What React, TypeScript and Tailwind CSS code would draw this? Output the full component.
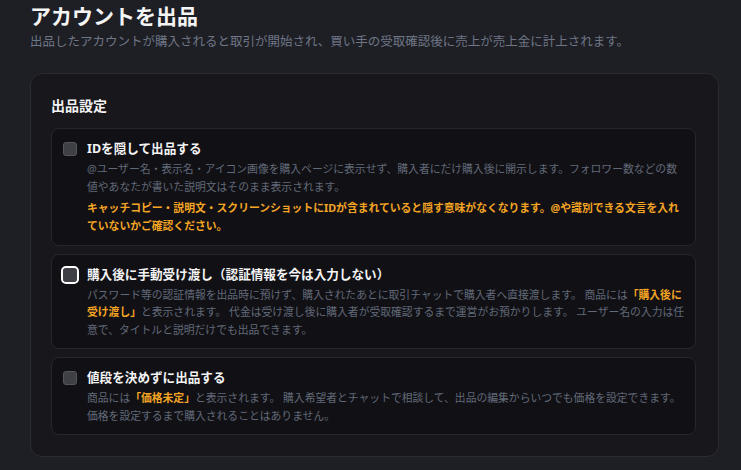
import { useState } from "react";

type Option = {
    id: string;
    title: string;
    body: React.ReactNode;
    warning?: string;
};

const Hl = ({ children }: { children: React.ReactNode }) => (
    <span className="font-bold text-[#f5a524]">{children}</span>
);

const options: Option[] = [
    {
        id: "hide",
        title: "IDを隠して出品する",
        body: "@ユーザー名・表示名・アイコン画像を購入ページに表示せず、購入者にだけ購入後に開示します。フォロワー数などの数値やあなたが書いた説明文はそのまま表示されます。",
        warning:
            "キャッチコピー・説明文・スクリーンショットにIDが含まれていると隠す意味がなくなります。@や識別できる文言を入れていないかご確認ください。",
    },
    {
        id: "manual",
        title: "購入後に手動受け渡し（認証情報を今は入力しない）",
        body: (
            <>
                パスワード等の認証情報を出品時に預けず、購入されたあとに取引チャットで購入者へ直接渡します。 商品には
                <Hl>「購入後に受け渡し」</Hl>
                と表示されます。 代金は受け渡し後に購入者が受取確認するまで運営がお預かりします。 ユーザー名の入力は任意で、タイトルと説明だけでも出品できます。
            </>
        ),
    },
    {
        id: "price",
        title: "値段を決めずに出品する",
        body: (
            <>
                商品には<Hl>「価格未定」</Hl>と表示されます。 購入希望者とチャットで相談して、出品の編集からいつでも価格を設定できます。価格を設定するまで購入されることはありません。
            </>
        ),
    },
];

export default function App() {
    const [checked, setChecked] = useState<Record<string, boolean>>({});
    const focused = "manual";

    return (
        <div className="min-h-[470px] bg-[#1e1f24] pl-[30px] pr-[22px] pt-[2px] pb-4 font-['Noto_Sans','Noto_Sans_CJK_JP',sans-serif]">
            <h1 className="text-[21px] font-bold leading-[28px] text-[#f4f4f5]">アカウントを出品</h1>
            <p className="mt-[2px] text-[12.5px] leading-[20px] text-[#6f7687]">
                出品したアカウントが購入されると取引が開始され、買い手の受取確認後に売上が売上金に計上されます。
            </p>

            <section className="mt-[21px] rounded-xl border border-[#2b2b31] bg-[#18181c] pl-5 pr-[22px] pt-[22px] pb-[21px]">
                <h2 className="mb-3 text-[14px] font-bold leading-[20px] text-[#f4f4f5]">出品設定</h2>

                <div className="flex flex-col gap-2">
                    {options.map((o) => (
                        <label
                            key={o.id}
                            className="flex cursor-pointer gap-[10px] rounded-lg border border-[#26262c] bg-[#111115] pl-[11px] pr-[9.5px] pt-[10px] pb-[10px]"
                        >
                            <span className="flex h-5 items-center">
                                <input
                                    type="checkbox"
                                    checked={!!checked[o.id]}
                                    onChange={() => setChecked({ ...checked, [o.id]: !checked[o.id] })}
                                    className={`h-[14px] w-[14px] appearance-none rounded-[3px] border bg-[#3f3f46] ${
                                        o.id === focused
                                            ? "border-[#3f3f46] outline-2 outline-offset-0 outline-white"
                                            : "border-[#55555c]"
                                    }`}
                                />
                            </span>
                            <div className="min-w-0 flex-1">
                                <div className="text-[12.6px] font-bold leading-[20px] text-[#f4f4f5]">{o.title}</div>
                                <p className="mt-[1px] text-[10.8px] leading-[17.5px] text-[#626979]">{o.body}</p>
                                {o.warning && (
                                    <p className="mt-[3.5px] text-[10.8px] font-bold leading-[18px] text-[#f5a524]">
                                        {o.warning}
                                    </p>
                                )}
                            </div>
                        </label>
                    ))}
                </div>
            </section>
        </div>
    );
}
